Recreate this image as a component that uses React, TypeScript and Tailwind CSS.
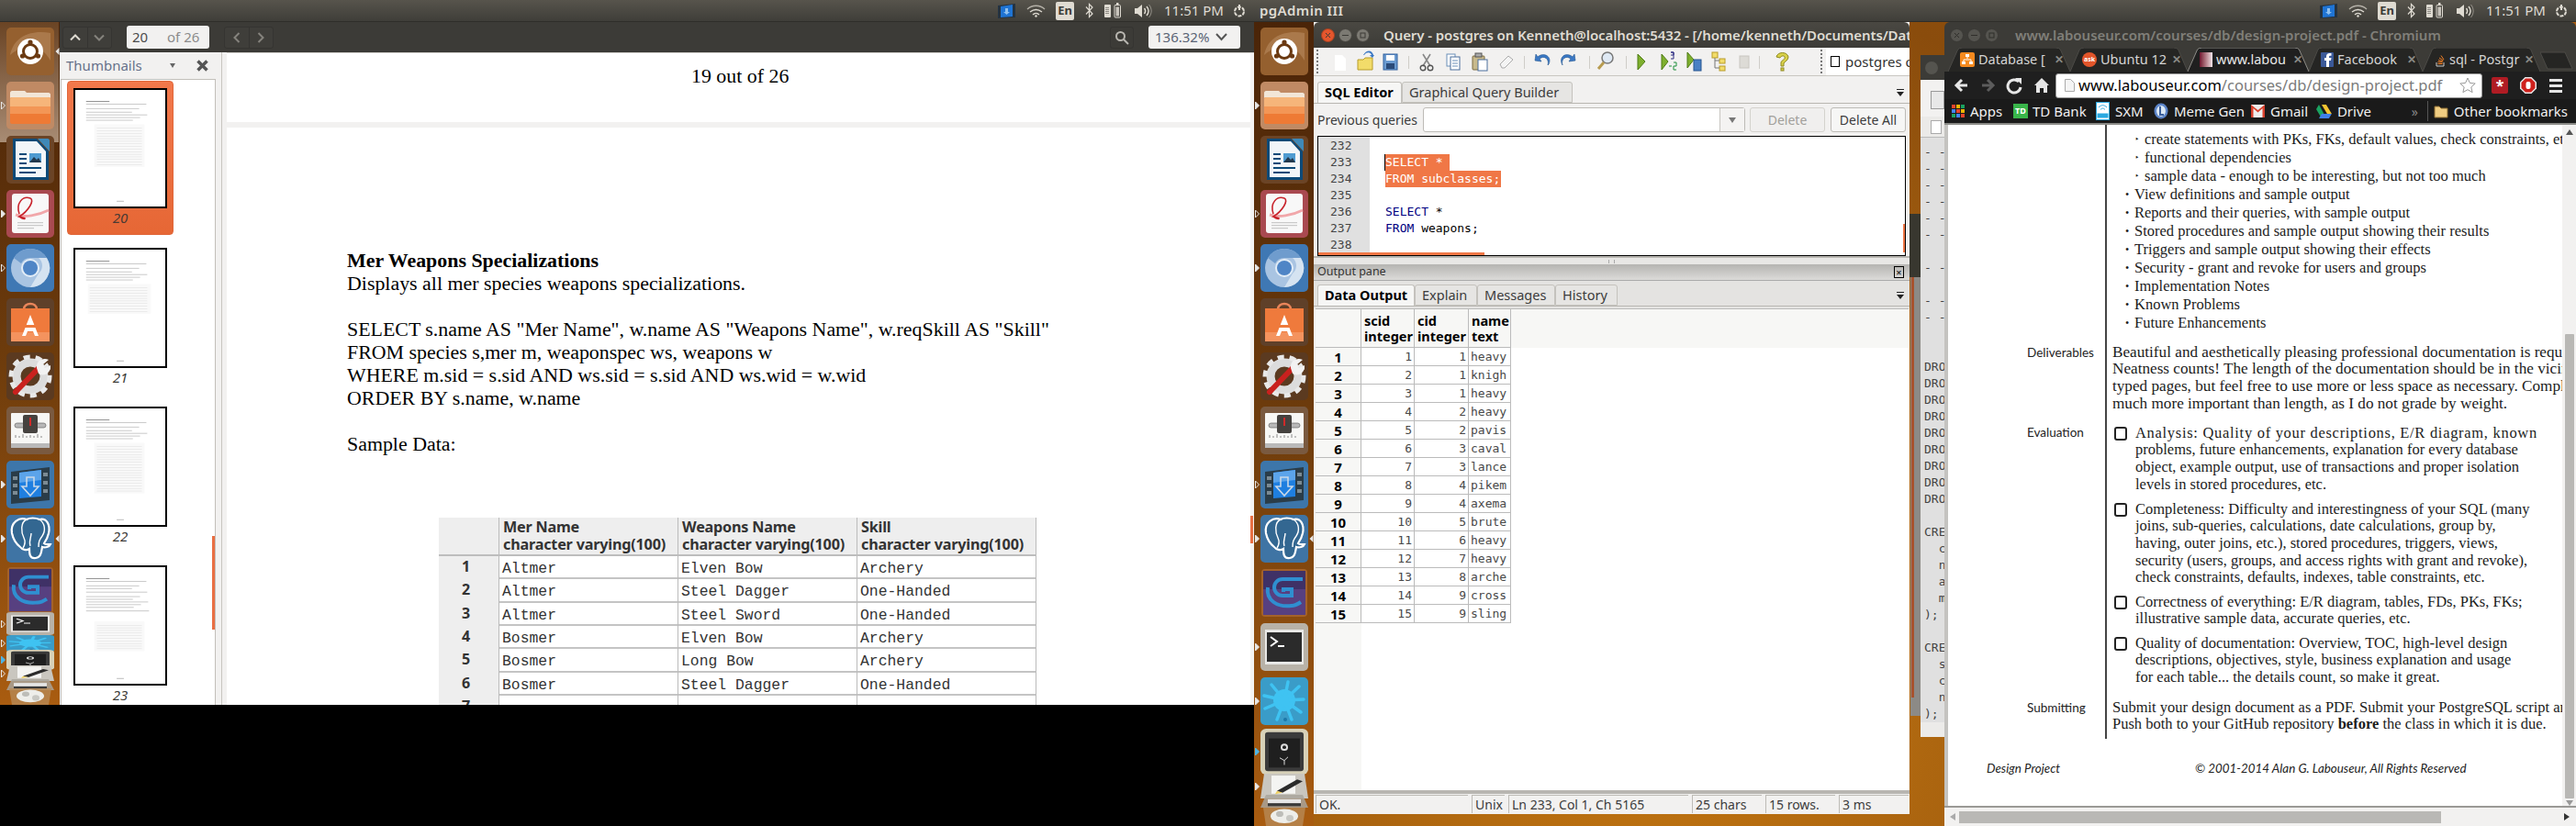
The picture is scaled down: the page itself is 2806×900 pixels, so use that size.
import { ReactNode } from "react"

type IconName =
  | "dash" | "files" | "writer" | "evince" | "chromium" | "bag" | "settings" | "mixer"
  | "movie" | "pg" | "gd" | "terminal" | "splash" | "safe" | "editor" | "drive" | "trash"

function LauncherArt({ name }: { name: IconName }) {
  switch (name) {
    case "dash":
      return (
        <>
          <rect width="52" height="52" rx="5" fill="#95602f" />
          <path d="M4 30C8 10 26 2 48 6v30C38 18 20 16 4 30z" fill="#b98a5f" opacity=".6" />
          <circle cx="26" cy="26" r="14" fill="#fff" />
          <circle cx="26" cy="26" r="7.5" fill="none" stroke="#6b3a12" strokeWidth="3" />
          <circle cx="26" cy="16" r="2.6" fill="#6b3a12" />
          <circle cx="17.5" cy="31" r="2.6" fill="#6b3a12" />
          <circle cx="34.5" cy="31" r="2.6" fill="#6b3a12" />
        </>
      )
    case "files":
      return (
        <>
          <rect width="52" height="52" rx="5" fill="#c08a64" />
          <path d="M4 12c0-1 1-2 2-2h14l2 2h24c1 0 2 1 2 2v4H4z" fill="#f2e6d8" />
          <rect x="4" y="17" width="44" height="29" rx="2" fill="#ee7a35" />
          <rect x="4" y="17" width="44" height="13" rx="2" fill="#f6b57a" />
          <rect x="4" y="27" width="44" height="8" fill="#f39656" />
        </>
      )
    case "writer":
      return (
        <>
          <rect width="52" height="52" rx="5" fill="#6b4426" />
          <path d="M7 3h26l13 14v31H7z" fill="#0d4a78" />
          <path d="M34 3h11c1 0 2 1 2 2v12z" fill="#3f89b8" />
          <path d="M10 6h23l10 11v28H10z" fill="#f2f5f8" />
          <g fill="#0d4a78">
            <rect x="14" y="19" width="8" height="2" />
            <rect x="14" y="24" width="8" height="2" />
            <rect x="14" y="29" width="8" height="2" />
            <rect x="14" y="34" width="24" height="2" />
            <rect x="14" y="39" width="18" height="2" />
          </g>
          <rect x="25" y="19" width="13" height="10" fill="#4f9bd1" />
          <path d="M25 29l5-6 3 3 2-2 3 5z" fill="#23394d" />
        </>
      )
    case "evince":
      return (
        <>
          <rect width="52" height="52" rx="5" fill="#a94950" />
          <rect x="6" y="4" width="40" height="43" rx="3" fill="#f8f8f8" />
          <path d="M46 22C34 28 20 30 10 27" fill="none" stroke="#f1a7aa" strokeWidth="3" />
          <path d="M14 26C10 14 18 6 26 9c5 2-2 14-12 20 10 2 6 4 0 0" fill="none" stroke="#c8232c" strokeWidth="1.6" />
          <g fill="#c9c9c9">
            <rect x="12" y="35" width="28" height="1.2" />
            <rect x="12" y="38" width="28" height="1.2" />
            <rect x="12" y="41" width="18" height="1.2" />
          </g>
        </>
      )
    case "chromium":
      return (
        <>
          <rect width="52" height="52" rx="5" fill="#3f78b4" />
          <circle cx="26" cy="26" r="21" fill="#a9c4e2" />
          <path d="M26 5a21 21 0 0 1 18 10H26a11 11 0 0 0-10 6L8 15A21 21 0 0 1 26 5z" fill="#6f9ccd" />
          <path d="M44 15a21 21 0 0 1-18 32l9-15a11 11 0 0 0 0-17z" fill="#d5e3f1" />
          <circle cx="26" cy="26" r="10" fill="#e3edf7" />
          <circle cx="26" cy="26" r="8" fill="#4f85c6" />
        </>
      )
    case "bag":
      return (
        <>
          <rect width="52" height="52" rx="5" fill="#5f4029" />
          <path d="M19 12c0-8 14-8 14 0" fill="none" stroke="#e9855a" strokeWidth="2.6" />
          <rect x="5" y="11" width="42" height="36" fill="#ef7a3c" />
          <rect x="5" y="37" width="42" height="10" fill="#f4935e" />
          <path d="M26 18l9 23h-4l-2-5h-6l-2 5h-4z" fill="#fff" />
          <rect x="17" y="29" width="18" height="3" fill="#ef7a3c" />
        </>
      )
    case "settings":
      return (
        <>
          <rect width="52" height="52" rx="5" fill="#5b3a20" />
          <circle cx="26" cy="26" r="15" fill="none" stroke="#dcdcdc" strokeWidth="9" />
          <circle cx="26" cy="26" r="21" fill="none" stroke="#e8e8e8" strokeWidth="5" strokeDasharray="7 6" />
          <path d="M10 43L36 16" stroke="#c9211e" strokeWidth="6" strokeLinecap="round" />
          <path d="M33 17c-1-7 6-12 13-9l-6 5 2 4 6-3c1 8-7 13-13 9z" fill="#f2f2f2" />
        </>
      )
    case "mixer":
      return (
        <>
          <rect width="52" height="52" rx="5" fill="#7a5a40" />
          <rect x="5" y="7" width="42" height="38" rx="1" fill="#f7f7f5" />
          <rect x="5" y="40" width="42" height="5" fill="#b9b9b9" />
          <rect x="9" y="18" width="34" height="5" rx="2.5" fill="#b8b8b8" stroke="#555" strokeWidth=".6" />
          <rect x="18" y="9" width="16" height="20" rx="2" fill="#45423f" />
          <rect x="25" y="12" width="2" height="9" fill="#d02a2a" />
          <path d="M10 34v-3m4 3v-2m4 2v-4m4 4v-2m4 2v-3m4 3v-2m4 2v-4m4 4v-2" stroke="#8a8a8a" />
        </>
      )
    case "movie":
      return (
        <>
          <rect width="52" height="52" rx="5" fill="#3d76aa" />
          <path d="M5 12l42-5v36l-42 4z" fill="#2a3c48" />
          <path d="M14 13l24-3v29l-24 2z" fill="#1f7fe0" />
          <path d="M14 13l24-3v11l-24 3z" fill="#5ca4ea" />
          <path d="M22 18h8v10h5l-9 10-9-10h5z" fill="none" stroke="#c8d8e8" strokeWidth="1.6" />
          <g fill="#7b8a93">
            <rect x="7" y="17" width="5" height="4" />
            <rect x="7" y="25" width="5" height="4" />
            <rect x="7" y="33" width="5" height="4" />
            <rect x="40" y="13" width="5" height="4" />
            <rect x="40" y="22" width="5" height="4" />
            <rect x="40" y="31" width="5" height="4" />
          </g>
        </>
      )
    case "pg":
      return (
        <>
          <rect width="52" height="52" rx="5" fill="#3f74a4" />
          <path d="M6 20C4 8 14 2 22 5c3-2 10-2 14 0 8-2 12 6 10 15-1 5-3 8-5 11 2 2 5 1 7 1-1 3-6 4-9 3-1 5-1 11-7 12-7 1-7-5-7-10-3 2-8 1-10-2-5-4-8-10-9-15z" fill="#336791" stroke="#fff" strokeWidth="2.2" />
          <path d="M22 5c-7 3-6 14-3 20 2 4 1 8-1 11M36 5c6 4 7 12 3 18-3 4-4 6-4 12M26 34c-2-5 1-9 1-14" fill="none" stroke="#fff" strokeWidth="1.4" />
        </>
      )
    case "gd":
      return (
        <>
          <rect x="1" y="0" width="50" height="52" rx="4" fill="#a4622a" />
          <rect x="3" y="2" width="46" height="48" fill="#574080" />
          <rect x="3" y="2" width="46" height="20" fill="#3f3166" />
          <path d="M46 11H24c-5 0-9 4-9 9s4 9 9 9h10v-7h-9v3" fill="none" stroke="#2f8fd0" strokeWidth="4" />
          <path d="M8 20c-2 14 10 22 26 20 4 0 7-2 10-4" fill="none" stroke="#2f8fd0" strokeWidth="4" />
        </>
      )
    case "terminal":
      return (
        <>
          <rect width="52" height="52" rx="5" fill="#b8b2a8" />
          <rect x="5" y="7" width="42" height="38" fill="#e8e8e6" />
          <rect x="7" y="10" width="38" height="32" fill="#2b2b2b" />
          <path d="M11 15l7 5-7 5" fill="none" stroke="#fff" strokeWidth="2" />
          <rect x="19" y="24" width="7" height="2" fill="#fff" />
        </>
      )
    case "splash":
      return (
        <>
          <rect width="52" height="52" rx="5" fill="#3a9cc8" />
          <circle cx="26" cy="25" r="12" fill="#3fc3f2" />
          <path d="M26 25L12 8M26 25L30 5M26 25L42 10M26 25L47 24M26 25L44 38M26 25L34 46M26 25L18 46M26 25L5 34M26 25L4 20" stroke="#3fc3f2" strokeWidth="3.5" strokeLinecap="round" />
          <circle cx="27" cy="46" r="2" fill="#1c77a8" />
        </>
      )
    case "safe":
      return (
        <>
          <rect width="52" height="52" rx="6" fill="#d7d1b8" />
          <rect x="5" y="4" width="42" height="44" rx="3" fill="#3b3b3b" />
          <rect x="9" y="11" width="34" height="33" fill="#1f1f1f" />
          <circle cx="26" cy="21" r="4" fill="#ddd" />
          <circle cx="26" cy="21" r="2" fill="#222" />
          <path d="M26 36l-5-3M26 36l4-4M26 36v5" stroke="#ddd" />
        </>
      )
    case "editor":
      return (
        <>
          <path d="M4 0h44l4 52H0z" fill="#c9c6bf" />
          <rect x="12" y="4" width="26" height="38" fill="#f4f4f2" />
          <path d="M18 36l22-24 6 4-22 24z" fill="#2b2b2b" />
          <path d="M18 36l6 4-8 3z" fill="#f0d060" />
        </>
      )
    case "drive":
      return (
        <>
          <path d="M6 0h40l6 52H0z" fill="#a9a49b" opacity=".85" />
          <rect x="8" y="18" width="36" height="18" fill="#e6e6e6" />
          <rect x="8" y="34" width="36" height="12" fill="#3a3a3a" />
        </>
      )
    case "trash":
      return (
        <>
          <path d="M3 0h46l-3 52H6z" fill="#b88a55" opacity=".8" />
          <ellipse cx="26" cy="24" rx="15" ry="20" fill="#eeeeea" />
          <ellipse cx="21" cy="18" rx="4" ry="8" fill="#bdbdb8" />
          <ellipse cx="32" cy="30" rx="4" ry="9" fill="#c8c8c3" />
        </>
      )
  }
}

function Tile({ name, h = 52, pip, right, className = "" }: { name: IconName; h?: number; pip?: "solid" | "hollow" | "blue"; right?: boolean; className?: string }) {
  return (
    <div className={`relative w-[52px] shrink-0 ${className}`}>
      <svg width="52" height={h} viewBox="0 0 52 52" preserveAspectRatio="none" className="block">
        <LauncherArt name={name} />
      </svg>
      {pip && (
        <svg width="5" height="9" viewBox="0 0 5 9" className="absolute top-1/2 left-[-6px] -translate-y-1/2">
          <path
            d="M.5.5L4.5 4.5.5 8.5z"
            fill={pip === "hollow" ? "none" : pip === "blue" ? "#4db6e8" : "#e8e8e8"}
            stroke={pip === "blue" ? "#4db6e8" : "#e8e8e8"}
          />
        </svg>
      )}
      {right && (
        <svg width="5" height="9" viewBox="0 0 5 9" className="absolute top-1/2 right-[-6px] -translate-y-1/2">
          <path d="M4.5.5L.5 4.5 4.5 8.5z" fill="#e8e8e8" />
        </svg>
      )}
    </div>
  )
}

function Launcher({ monitor }: { monitor: "left" | "right" }) {
  const left = monitor === "left"
  return (
    <div className="relative w-[65px] shrink-0 h-full overflow-hidden bg-gradient-to-b from-[#4a2408] via-[#6e3c0c] to-[#a95c10] flex flex-col items-center gap-[7px] pt-[6px]">
      {left && <div className="absolute top-0 left-0 w-[64px] h-[131px] bg-gradient-to-b from-[#6a4424] to-[#a88c74]" />}
      <Tile name="dash" right={left} />
      <Tile name="files" pip={left ? "hollow" : "solid"} />
      <Tile name="writer" />
      <Tile name="evince" pip={left ? "solid" : "hollow"} />
      <Tile name="chromium" pip={left ? "hollow" : "solid"} />
      <Tile name="bag" />
      <Tile name="settings" />
      <Tile name="mixer" />
      <Tile name="movie" pip={left ? "solid" : "hollow"} />
      <Tile name="pg" pip="solid" right />
      {left ? (
        <>
          <Tile name="gd" h={50} className="-mt-[2px]" />
          <div className="flex flex-col -mt-[8px]">
            <Tile name="terminal" h={25} pip="hollow" />
            <Tile name="splash" h={18} pip="hollow" />
            <Tile name="safe" h={22} pip="blue" className="-mt-[2px]" />
            <Tile name="editor" h={17} pip="hollow" className="-mt-[5px]" />
            <Tile name="drive" h={12} className="-mt-[2px]" />
            <Tile name="trash" h={18} className="-mt-[2px]" />
          </div>
        </>
      ) : (
        <>
          <Tile name="gd" />
          <Tile name="terminal" pip="solid" />
          <Tile name="splash" pip="solid" />
          <div className="flex flex-col -mt-[3px]">
            <Tile name="safe" h={50} pip="blue" />
            <Tile name="editor" h={27} pip="solid" className="-mt-[1px]" />
            <Tile name="drive" h={14} className="-mt-[4px]" />
            <Tile name="trash" h={20} />
          </div>
        </>
      )}
    </div>
  )
}

function Indicators() {
  return (
    <div className="flex items-center h-full">
      <svg width="21" height="18" viewBox="0 0 21 18" className="mr-[11px]">
        <path d="M1 3l19-2v15L1 17z" fill="#243342" />
        <path d="M4 4l13-2v13L4 16z" fill="#1f74d4" />
        <path d="M9 6h3v4h2l-3.5 3L7 10h2z" fill="#8fc0ef" />
      </svg>
      <svg width="21" height="14" viewBox="0 0 21 14" className="mr-[11px]" fill="none" stroke="#dfdbd2">
        <path d="M1 5c5-5 14-5 19 0" strokeWidth="1.3" opacity=".7" />
        <path d="M4 8c4-3 9-3 13 0" strokeWidth="1.4" />
        <path d="M7 11c2-2 5-2 7 0" strokeWidth="1.4" />
        <circle cx="10.5" cy="12.5" r="1.2" fill="#dfdbd2" stroke="none" />
      </svg>
      <div className="w-[20px] h-[20px] rounded-[2px] bg-[#dfdbd2] text-[#3c3b37] text-[13px] font-bold flex items-center justify-center mr-[12px] font-['Noto_Sans',sans-serif]">En</div>
      <svg width="9" height="17" viewBox="0 0 9 17" className="mr-[12px]" fill="none" stroke="#dfdbd2" strokeWidth="1.2">
        <path d="M1 4.5l7 7.5-3.500 3.500V1.500L8 5 1 12.500" />
      </svg>
      <svg width="18" height="17" viewBox="0 0 18 17" className="mr-[14px]">
        <rect x="0" y="2" width="7" height="14" rx="1" fill="#dfdbd2" />
        <path d="M2 5v8M4 5v8" stroke="#3c3b37" strokeDasharray="1 1" />
        <rect x="11" y="2.5" width="6.5" height="13.5" rx="1" fill="none" stroke="#dfdbd2" />
        <rect x="12.5" y="4.5" width="3.5" height="10" fill="#dfdbd2" opacity=".85" />
        <rect x="13" y="0" width="2.5" height="2" fill="#dfdbd2" />
      </svg>
      <svg width="20" height="16" viewBox="0 0 20 16" className="mr-[13px]" fill="none" stroke="#dfdbd2">
        <path d="M1 5h3l5-4v14l-5-4H1z" fill="#dfdbd2" stroke="none" />
        <path d="M11.5 5c1.5 2 1.5 4 0 6" strokeWidth="1.5" />
        <path d="M14 3c2.5 3 2.5 7 0 10" strokeWidth="1.4" />
        <path d="M16.5 1c3.5 4 3.500 10 0 14" opacity=".5" />
      </svg>
      <span className="text-[15px] text-[#dfdbd2] mr-[14px] whitespace-nowrap w-[60px] font-['Noto_Sans',sans-serif]">11:51 PM</span>
      <svg width="16" height="16" viewBox="0 0 16 16" fill="none" stroke="#dfdbd2" className="mr-[3px]">
        <circle cx="8" cy="8.5" r="5" strokeWidth="2" strokeDasharray="4 1.2" />
        <path d="M8 1v6" strokeWidth="2" />
      </svg>
    </div>
  )
}

function Panel({ title }: { title?: string }) {
  return (
    <div className="h-6 shrink-0 bg-gradient-to-b from-[#57544c] to-[#3f3e39] border-b border-[#2f2e2a] flex items-center justify-between pr-[5px]">
      <span className="pl-[6px] text-[15px] font-semibold text-[#dfdbd2] whitespace-nowrap tracking-[0.4px] font-['Noto_Sans',sans-serif]">{title}</span>
      <Indicators />
    </div>
  )
}

function ThumbArt({ variant }: { variant: number }) {
  const rows = variant === 0 ? 15 : variant === 1 ? 10 : variant === 2 ? 18 : 10
  const top = variant === 3 ? 60 : 38
  const lines = variant === 3 ? [12, 15, 20, 23, 27, 32, 35, 38, 41, 44, 48] : [12, 15, 20, 24, 27, 30, 33]
  return (
    <svg width="98" height="127" viewBox="0 0 100 129" className="block">
      {lines.map((y, i) => (
        <rect key={i} x="12" y={y} width={i === 0 ? 26 : 50 + ((i * 17) % 25)} height=".8" fill={i === 0 ? "#777" : "#bbb"} />
      ))}
      <rect x={variant === 1 ? 14 : 21} y={top} width={variant === 1 ? 70 : 56} height={rows * 2.9 + 4} fill="#f9f9f9" />
      {Array.from({ length: rows }).map((_, i) => (
        <rect key={i} x={variant === 1 ? 16 : 24} y={top + 4 + i * 2.9} width={variant === 1 ? 64 : 50} height=".5" fill="#dcdcdc" />
      ))}
      <rect x="46" y="123" width="8" height=".8" fill="#aaa" />
    </svg>
  )
}

function Thumb({ n, variant, selected }: { n: number; variant: number; selected?: boolean }) {
  if (selected) {
    return (
      <div className="ml-[6px] w-[116px] h-[168px] shrink-0 bg-gradient-to-b from-[#f2784b] to-[#e66735] border border-[#e0663a] rounded-[4px] flex flex-col items-center pt-[7px]">
        <div className="border-2 border-black bg-white">
          <ThumbArt variant={variant} />
        </div>
        <span className="h-[20px] leading-[20px] text-[15px] italic text-[#4a3a33] font-['Noto_Sans',sans-serif]">{n}</span>
      </div>
    )
  }
  return (
    <div className="ml-[13px] w-[102px] mb-[8px] shrink-0 flex flex-col items-center">
      <div className="border-2 border-black bg-white">
        <ThumbArt variant={variant} />
      </div>
      <span className="h-[20px] leading-[20px] text-[15px] italic text-[#3c3b37] font-['Noto_Sans',sans-serif]">{n}</span>
    </div>
  )
}

function NavGroup({ children }: { children: ReactNode }) {
  return <div className="h-[24px] w-[54px] flex rounded-[3px] border border-[#353431] bg-[#3f3e3a] divide-x divide-[#353431]">{children}</div>
}

function NavBtn({ d, dim }: { d: string; dim?: boolean }) {
  return (
    <div className="flex-1 flex items-center justify-center">
      <svg width="14" height="14" viewBox="0 0 14 14" fill="none" stroke={dim ? "#85837d" : "#dfdbd2"} strokeWidth="2">
        <path d={d} />
      </svg>
    </div>
  )
}

const pdfRows = [
  ["1", "Altmer", "Elven Bow", "Archery"],
  ["2", "Altmer", "Steel Dagger", "One-Handed"],
  ["3", "Altmer", "Steel Sword", "One-Handed"],
  ["4", "Bosmer", "Elven Bow", "Archery"],
  ["5", "Bosmer", "Long Bow", "Archery"],
  ["6", "Bosmer", "Steel Dagger", "One-Handed"],
  ["7", "", "", ""],
]

function EvinceWindow() {
  return (
    <div className="flex-1 min-w-0 h-full flex flex-col bg-[#f2f1f0]">
      <div className="h-[33px] shrink-0 bg-[#3c3b37] flex items-center pl-[3px] pr-[15px]">
        <NavGroup>
          <NavBtn d="M2 9.5l5-5 5 5" />
          <NavBtn d="M2 4.5l5 5 5-5" dim />
        </NavGroup>
        <div className="ml-[16px] w-[90px] h-[25px] rounded-[3px] bg-[#f2f1f0] flex items-center pl-[6px] text-[15px] font-['Noto_Sans',sans-serif]">
          <span className="w-[38px] text-[#4c4c4c]">20</span>
          <span className="text-[#8c8c8c]">of 26</span>
        </div>
        <div className="ml-[16px]">
          <NavGroup>
            <NavBtn d="M9.5 2l-5 5 5 5" dim />
            <NavBtn d="M4.5 2l5 5-5 5" dim />
          </NavGroup>
        </div>
        <div className="ml-auto w-[26px] h-[24px] rounded-[3px] border border-[#353431] flex items-center justify-center">
          <svg width="16" height="16" viewBox="0 0 16 16" fill="none" stroke="#b8b6b0" strokeWidth="2">
            <circle cx="6.5" cy="6.5" r="4.5" />
            <path d="M10 10l5 5" />
          </svg>
        </div>
        <div className="ml-[16px] w-[100px] h-[25px] rounded-[3px] bg-[#f2f1f0] flex items-center justify-between pl-[7px] pr-[14px] text-[15px] text-[#5a6475] font-['Noto_Sans',sans-serif]">
          136.32%
          <svg width="13" height="9" viewBox="0 0 13 9" fill="none" stroke="#555" strokeWidth="2">
            <path d="M1 1l5.5 6L12 1" />
          </svg>
        </div>
      </div>
      <div className="flex-1 min-h-0 flex">
        <div className="w-[170px] shrink-0 flex flex-col">
          <div className="h-[29px] shrink-0 flex items-center pl-[7px] pr-[8px] text-[15px] text-[#66718a] font-['Noto_Sans',sans-serif]">
            <span className="flex-1">Thumbnails</span>
            <svg width="6" height="5" viewBox="0 0 6 5" className="mr-[23px]">
              <path d="M0 0h6L3 5z" fill="#666" />
            </svg>
            <svg width="13" height="13" viewBox="0 0 13 13" stroke="#555" strokeWidth="3.5">
              <path d="M1.5 1.5l10 10M11.5 1.5l-10 10" />
            </svg>
          </div>
          <div className="relative flex-1 min-h-0 overflow-hidden bg-white border-x border-t border-[#c2bfba] ml-[1px] flex flex-col pt-[1px] gap-[14px]">
            <Thumb n={20} variant={0} selected />
            <Thumb n={21} variant={1} />
            <Thumb n={22} variant={2} />
            <Thumb n={23} variant={3} />
            <div className="absolute right-0 top-[497px] w-[3px] h-[102px] bg-[#e96f43]" />
          </div>
        </div>
        <div className="w-[12px] shrink-0 flex justify-center">
          <div className="w-px bg-[#c8c5c0] ml-[1px]" />
        </div>
        <div className="relative flex-1 min-w-0 flex flex-col gap-[6px] border-t border-[#d5d3ce] text-[21.9px] leading-[25px] text-black font-['Liberation_Serif',serif]">
          <div className="h-[75px] shrink-0 bg-white pt-[12px] pl-[506px]">19 out of 26</div>
          <div className="flex-1 bg-white pt-[132px] pl-[131px] overflow-hidden">
            <div className="font-bold">Mer Weapons Specializations</div>
            <div>Displays all mer species weapons specializations.</div>
            <div className="h-[25px]" />
            <div className="whitespace-nowrap">SELECT s.name AS "Mer Name", w.name AS "Weapons Name", w.reqSkill AS "Skill"</div>
            <div>FROM species s,mer m, weaponspec ws, weapons w</div>
            <div>WHERE m.sid = s.sid AND ws.sid = s.sid AND ws.wid = w.wid</div>
            <div>ORDER BY s.name, w.name</div>
            <div className="h-[25px]" />
            <div>Sample Data:</div>
            <div className="ml-[100px] mt-[68px] w-[651px]">
              <div className="grid grid-cols-[66px_195px_195px_195px] h-[42px] bg-[#eeeeee] border-b-2 border-[#bdbdbd] text-[16.2px] leading-[18.5px] font-bold text-[#333] tracking-[-0.2px] font-['Noto_Sans',sans-serif]">
                <div className="border-r border-[#bbb]" />
                {["Mer Name", "Weapons Name", "Skill"].map((h) => (
                  <div key={h} className="border-r border-[#bbb] pl-[4px] pt-[1px]">
                    {h}
                    <div className="whitespace-nowrap">character varying(100)</div>
                  </div>
                ))}
              </div>
              {pdfRows.map((r) => (
                <div key={r[0]} className="grid grid-cols-[66px_195px_195px_195px] h-[25.33px] border-b-2 border-[#c4c4c4] text-[16.4px] leading-[27px] text-[#333] font-['Liberation_Mono',monospace]">
                  <div className="bg-[#eeeeee] border-r border-[#bbb] text-center pr-[6px] font-bold font-['Noto_Sans',sans-serif] text-[16px] leading-[23px]">{r[0]}</div>
                  <div className="border-r border-[#bbb] pl-[3px]">{r[1]}</div>
                  <div className="border-r border-[#bbb] pl-[3px]">{r[2]}</div>
                  <div className="border-r border-[#bbb] pl-[3px]">{r[3]}</div>
                </div>
              ))}
            </div>
          </div>
          <div className="absolute right-0 top-0 bottom-0 w-[4px] bg-[#f5f4f3]" />
          <div className="absolute right-[1px] top-[504px] w-[3px] h-[30px] bg-[#e96f43]" />
        </div>
      </div>
    </div>
  )
}

function WindowButtons({ dim }: { dim?: boolean }) {
  return (
    <div className="flex gap-[4px]">
      {[0, 1, 2].map((i) => (
        <div
          key={i}
          className={`w-[15px] h-[15px] rounded-full flex items-center justify-center ${dim ? "bg-[#55544f] border border-[#3a3935]" : i === 0 ? "bg-[#e5562d] border border-[#a8401f]" : "bg-[#7c7a73] border border-[#45433e]"}`}
        >
          <svg width="7" height="7" viewBox="0 0 7 7" fill="none" stroke={dim ? "#2f2e2a" : "#3c3b37"} strokeWidth="1">
            {i === 0 && <path d="M1 1l5 5M6 1L1 6" />}
            {i === 1 && <path d="M0 3.5h7" />}
            {i === 2 && <rect x="1" y="1" width="5" height="5" />}
          </svg>
        </div>
      ))}
    </div>
  )
}

function ToolGlyph({ x, children }: { x: number; children: ReactNode }) {
  return <g transform={`translate(${x} 0)`}>{children}</g>
}

function PgToolbarArt() {
  return (
    <svg width="540" height="31" viewBox="0 0 540 31" className="block">
      <ToolGlyph x={13}>
        <path d="M1 8h8l4 4v13H1z" fill="#fff" />
      </ToolGlyph>
      <ToolGlyph x={38}>
        <path d="M1 13h6l2-2h8v13H1z" fill="#f2dc6a" stroke="#b89c28" />
        <path d="M8 8c3-4 7-3 8 0l-2 0 3 3 2-3h-1c-1-5-7-7-11 0z" fill="#3b78c4" />
      </ToolGlyph>
      <ToolGlyph x={66}>
        <rect x="1" y="7" width="15" height="17" fill="#6a9ad0" stroke="#2f5f9c" />
        <rect x="4" y="8" width="9" height="6" fill="#fff" />
        <rect x="4" y="17" width="9" height="6" fill="#2a4a78" />
      </ToolGlyph>
      <rect x="94" y="9" width="1" height="14" fill="#cfcdc8" />
      <ToolGlyph x={106}>
        <path d="M4 7l8 13M12 7L4 20" stroke="#888" strokeWidth="1.6" />
        <circle cx="4" cy="22" r="2.8" fill="none" stroke="#555" strokeWidth="1.4" />
        <circle cx="12" cy="22" r="2.8" fill="none" stroke="#555" strokeWidth="1.4" />
      </ToolGlyph>
      <ToolGlyph x={135}>
        <rect x="1" y="7" width="9" height="13" fill="#fff" stroke="#6b8fb8" />
        <rect x="5" y="10" width="10" height="14" fill="#fff" stroke="#4a6f9c" />
        <path d="M7 14h6M7 17h6M7 20h6" stroke="#6b8fb8" />
      </ToolGlyph>
      <ToolGlyph x={163}>
        <rect x="1" y="9" width="13" height="15" rx="1" fill="#c8b98c" stroke="#7a6a40" />
        <rect x="4" y="6" width="7" height="4" fill="#aaa" stroke="#555" />
        <rect x="7" y="13" width="10" height="12" fill="#fff" stroke="#4a6f9c" />
      </ToolGlyph>
      <ToolGlyph x={192}>
        <path d="M2 18l9-9 5 4-9 9H4z" fill="#f4f4f4" stroke="#aaa" />
      </ToolGlyph>
      <rect x="220" y="9" width="1" height="14" fill="#cfcdc8" />
      <ToolGlyph x={231}>
        <path d="M15 19c2-7-4-11-9-7l2 3-7-1 1-7 2 3c7-6 16 0 12 8z" fill="#3b78c4" stroke="#24558f" strokeWidth=".6" />
      </ToolGlyph>
      <ToolGlyph x={260}>
        <path d="M2 19c-2-7 4-11 9-7l-2 3 7-1-1-7-2 3C6 4-3 10 2 19z" fill="#3b78c4" stroke="#24558f" strokeWidth=".6" />
      </ToolGlyph>
      <rect x="291" y="9" width="1" height="14" fill="#cfcdc8" />
      <ToolGlyph x={300}>
        <circle cx="11" cy="11" r="6" fill="#dfe9f4" stroke="#777" strokeWidth="1.5" />
        <path d="M7 16l-6 7" stroke="#b89c50" strokeWidth="3" />
      </ToolGlyph>
      <rect x="331" y="9" width="1" height="14" fill="#cfcdc8" />
      <ToolGlyph x={342}>
        <path d="M2 7l8 8-8 9z" fill="#7fb02e" stroke="#4e7a14" />
      </ToolGlyph>
      <ToolGlyph x={369}>
        <path d="M1 7l7 8-7 9z" fill="#7fb02e" stroke="#4e7a14" />
        <path d="M11 5h3v7h-3M11 5h3v3h-3" fill="none" stroke="#2a2a80" />
        <path d="M9 20h3M14 16h3v4h-3v4h3" fill="none" stroke="#1f8f3a" />
      </ToolGlyph>
      <ToolGlyph x={397}>
        <path d="M1 5l7 8-7 9z" fill="#7fb02e" stroke="#4e7a14" />
        <rect x="8" y="13" width="8" height="12" fill="#4a80c4" stroke="#24558f" />
      </ToolGlyph>
      <ToolGlyph x={424}>
        <rect x="1" y="5" width="6" height="6" fill="#f2dc6a" stroke="#b89c28" />
        <rect x="9" y="12" width="6" height="5" fill="#f2dc6a" stroke="#b89c28" />
        <rect x="9" y="20" width="6" height="5" fill="#f2dc6a" stroke="#b89c28" />
        <path d="M4 11v11h5M4 14h5" fill="none" stroke="#777" />
      </ToolGlyph>
      <rect x="455" y="9" width="10" height="13" fill="#dddbd6" stroke="#c8c6c0" />
      <rect x="476" y="9" width="1" height="14" fill="#cfcdc8" />
      <ToolGlyph x={494}>
        <path d="M1 10c1-6 12-6 13 0 0 4-4 5-5 7v3H6v-4c1-3 5-3 4-6-1-2-4-1-5 1z" fill="#d8d04a" stroke="#8f8a20" />
        <rect x="6" y="22" width="3" height="3" fill="#d8d04a" stroke="#8f8a20" />
      </ToolGlyph>
    </svg>
  )
}

function Grip() {
  return <div className="w-[3px] h-[26px] mx-[3px] border-l-2 border-dotted border-[#777]" />
}

function NbTabs({ tabs }: { tabs: { label: string; w: number }[] }) {
  return (
    <div className="flex items-end pl-[4px] pr-[6px] border-b border-[#b8b6b1]">
      {tabs.map((t, i) => (
        <div
          key={t.label}
          style={{ width: t.w }}
          className={`h-[23px] border border-[#c4c2bd] rounded-t-[3px] flex items-center text-[14.5px] whitespace-nowrap pl-[7px] ${i === 0 ? "font-bold bg-[#f6f6f5] text-black border-b-0" : "bg-[#e6e5e3] text-[#3c3c3c]"}`}
        >
          {t.label}
        </div>
      ))}
      <svg width="8" height="8" viewBox="0 0 8 8" className="ml-auto mb-[7px]">
        <path d="M0 0h8v1H0zM0 3h8L4 8z" fill="#222" />
      </svg>
    </div>
  )
}

const editorLines = [
  { n: 232, text: null },
  { n: 233, text: "sel1" },
  { n: 234, text: "sel2" },
  { n: 235, text: null },
  { n: 236, text: "plain1" },
  { n: 237, text: "plain2" },
  { n: 238, text: null },
]

function EditorLine({ kind }: { kind: string | null }) {
  if (kind === "sel1") return <span className="inline-block w-[71px] h-[18px] bg-[#f07746] text-white border-l border-black -ml-px">SELECT *</span>
  if (kind === "sel2") return <span className="inline-block h-[18px] bg-[#f07746] text-white pr-[1px]">FROM subclasses;</span>
  if (kind === "plain1") return <span className="text-[#00007f]">SELECT <span className="text-black">*</span></span>
  if (kind === "plain2") return <span><span className="text-[#00007f]">FROM</span> <span className="text-black">weapons;</span></span>
  return null
}

const gridNames = ["heavy", "knigh", "heavy", "heavy", "pavis", "caval", "lance", "pikem", "axema", "brute", "heavy", "heavy", "arche", "cross", "sling"]
const gridCids = [1, 1, 1, 2, 2, 3, 3, 4, 4, 5, 6, 7, 8, 9, 9]

function PgAdminWindow() {
  return (
    <div className="absolute left-0 top-0 w-[649px] h-[863px] flex flex-col bg-[#f2f1f0] font-['Noto_Sans',sans-serif] overflow-hidden">
      <div className="h-[28px] shrink-0 bg-gradient-to-b from-[#4a4842] to-[#3c3b37] rounded-t-[6px] flex items-center pl-[8px] text-[#dfdbd2]">
        <WindowButtons />
        <span className="ml-[15px] text-[15px] font-semibold whitespace-nowrap tracking-[-0.1px]">Query - postgres on Kenneth@localhost:5432 - [/home/kenneth/Documents/Dat</span>
      </div>
      <div className="h-[31px] shrink-0 flex items-center justify-between border-b border-[#c8c6c1] overflow-hidden">
        <div className="flex items-center">
          <Grip />
          <PgToolbarArt />
        </div>
        <div className="flex items-center h-full">
          <Grip />
          <div className="w-[103px] h-full bg-white flex items-center pl-[5px] text-[15px] text-[#333] whitespace-nowrap overflow-hidden">
            <span className="w-[10px] h-[12px] border border-black mr-[6px] shrink-0" />
            postgres on
          </div>
        </div>
      </div>
      <div className="pt-[6px] shrink-0">
        <NbTabs tabs={[{ label: "SQL Editor", w: 92 }, { label: "Graphical Query Builder", w: 186 }]} />
      </div>
      <div className="h-[35px] shrink-0 flex items-center pl-[4px] pr-[4px] text-[14px] text-[#3c3c3c]">
        <span className="w-[115px] shrink-0 whitespace-nowrap">Previous queries</span>
        <div className="flex w-[351px] h-[27px] rounded-[3px] border border-[#bdbbb6] bg-white">
          <div className="flex-1" />
          <div className="w-[27px] bg-[#f4f3f2] border-l border-[#c8c6c1] flex items-center justify-center">
            <svg width="8" height="6" viewBox="0 0 8 6"><path d="M0 0h8L4 6z" fill="#777" /></svg>
          </div>
        </div>
        <div className="ml-[5px] w-[82px] h-[27px] rounded-[3px] border border-[#d4d2cd] bg-[#f0efee] flex items-center justify-center text-[#a2a09b]">Delete</div>
        <div className="ml-[6px] w-[82px] h-[27px] rounded-[3px] border border-[#bdbbb6] bg-[#f6f6f5] flex items-center justify-center whitespace-nowrap">Delete All</div>
      </div>
      <div className="relative mx-[4px] h-[131px] shrink-0 bg-white border border-black flex text-[13px] leading-[18px] font-['DejaVu_Sans_Mono',monospace] overflow-hidden">
        <div className="w-[56px] shrink-0 bg-[#e0e0e0] text-[#444] pl-[13px] pt-[1px]">
          {editorLines.map((l) => (
            <div key={l.n}>{l.n}</div>
          ))}
        </div>
        <div className="flex-1 pl-[17px] pt-[1px] whitespace-pre">
          {editorLines.map((l) => (
            <div key={l.n} className="h-[18px]">
              <EditorLine kind={l.text} />
            </div>
          ))}
        </div>
        <div className="absolute left-0 bottom-0 w-[181px] h-[3px] bg-[#f07746]" />
        <div className="absolute right-0 bottom-[3px] w-[2px] h-[31px] bg-[#f07746]" />
      </div>
      <div className="h-[9px] shrink-0 border-t-2 border-[#b8b6b1] bg-[#e8e7e5] flex items-center justify-center">
        <div className="w-[7px] h-[4px] border-x border-[#aaa]" />
      </div>
      <div className="h-[18px] shrink-0 bg-gradient-to-b from-[#b5b4b1] to-[#dcdbd9] border-b border-[#aaa] flex items-center justify-between pl-[4px] pr-[6px] text-[12.5px] text-[#333]">
        Output pane
        <span className="w-[11px] h-[13px] border border-black text-[11px] leading-[11px] font-bold text-center">×</span>
      </div>
      <div className="shrink-0 bg-[#e4e3e1] pt-[4px] pb-[2px]">
        <NbTabs tabs={[{ label: "Data Output", w: 106 }, { label: "Explain", w: 68 }, { label: "Messages", w: 85 }, { label: "History", w: 68 }]} />
      </div>
      <div className="flex-1 min-h-0 ml-[2px] mr-[1px] bg-white border-t border-[#bbb] flex overflow-hidden font-['DejaVu_Sans_Mono',monospace] text-[13px]">
        <div className="w-[50px] shrink-0 bg-[#f7f7f5]" />
        <div className="flex-1 min-w-0">
          <div className="-ml-[50px] bg-[#f7f7f5] h-[42px] flex font-bold text-[14.5px] leading-[17px] text-black font-['Noto_Sans',sans-serif]">
            <div className="w-[50px] border-r border-b border-[#bbb]" />
            <div className="w-[58px] border-r border-b border-[#bbb] pl-[3px] pt-[4px]">scid<div>integer</div></div>
            <div className="w-[59px] border-r border-b border-[#bbb] pl-[3px] pt-[4px]">cid<div>integer</div></div>
            <div className="w-[46px] border-r border-b border-[#bbb] pl-[3px] pt-[4px]">name<div>text</div></div>
          </div>
          {gridNames.map((name, i) => (
            <div key={i} className="-ml-[50px] h-[20px] flex leading-[19px] text-[#484848]">
              <div className="w-[50px] border-r border-b border-[#bbb] bg-[#f7f7f5] text-center font-bold text-[15px] leading-[21px] text-black font-['Noto_Sans',sans-serif]">{i + 1}</div>
              <div className="w-[58px] bg-white border-r border-b border-[#bbb] text-right pr-[2px]">{i + 1}</div>
              <div className="w-[59px] bg-white border-r border-b border-[#bbb] text-right pr-[2px]">{gridCids[i]}</div>
              <div className="w-[46px] bg-white border-r border-b border-[#bbb] pl-[2px] overflow-hidden whitespace-nowrap">{name}</div>
            </div>
          ))}
        </div>
      </div>
      <div className="h-[4px] shrink-0 bg-[#b8b6b1]" />
      <div className="h-[22px] shrink-0 flex items-center gap-[4px] pl-[2px] pr-[2px] text-[14px] text-[#3c3c3c]">
        {[
          { t: "OK.", w: 166 },
          { t: "Unix", w: 36 },
          { t: "Ln 233, Col 1, Ch 5165", w: 196 },
          { t: "25 chars", w: 76 },
          { t: "15 rows.", w: 76 },
          { t: "3 ms", w: 76 },
        ].map((s) => (
          <div key={s.t} style={{ width: s.w }} className="h-[20px] shrink-0 border-l border-t border-[#bdbbb6] pl-[3px] leading-[20px] whitespace-nowrap overflow-hidden">
            {s.t}
          </div>
        ))}
      </div>
    </div>
  )
}

const rearLines = [
  "- - K", "- - D", "- - S", "- - E", "- - F", "- - F", "", "- - M", "", "- - D", "- - C", "", "",
  "DROP", "DROP", "DROP", "DROP", "DROP", "DROP", "DROP", "DROP", "DROP", "",
  "CREATE", "  c", "  n", "  a", "  m", ");", "",
  "CREATE", "  s", "  c", "  n", ");",
]

function RearWindows() {
  return (
    <>
      <div className="absolute left-[649px] top-[209px] w-[12px] h-[69px] bg-[#38372f]" />
      <div className="absolute left-[650px] top-[278px] w-[11px] h-[478px] bg-[#8c8a86]">
        <div className="ml-[1px] w-[3px] h-[458px] bg-[#a7522e]" />
      </div>
      <div className="absolute left-[661px] top-[36px] w-[27px] h-[743px] flex flex-col bg-[#e0e0e0] overflow-hidden">
        <div className="h-[27px] shrink-0 bg-[#3c3b37] flex items-center pl-[5px]">
          <div className="w-[14px] h-[14px] rounded-full bg-[#55544f]" />
        </div>
        <div className="h-[40px] shrink-0 bg-[#f2f1f0] pl-[11px] pt-[12px]">
          <div className="w-[15px] h-[20px] bg-[#e8e8e8] border border-[#999]" />
        </div>
        <div className="h-[23px] shrink-0 bg-[#ebeae8] pl-[11px] pt-[4px] border-b border-[#bbb]">
          <div className="w-[12px] h-[15px] bg-white border border-[#aaa]" />
        </div>
        <div className="flex-1 pl-[4px] pt-[7px] text-[13px] leading-[18px] whitespace-pre text-[#444] font-['DejaVu_Sans_Mono',monospace]">
          {rearLines.map((l, i) => (
            <div key={i} className="h-[18px]">{l}</div>
          ))}
        </div>
        <div className="h-[24px] shrink-0 bg-[#ecebe9]" />
      </div>
    </>
  )
}

function Favicon({ kind }: { kind: string }) {
  if (kind === "db") {
    return (
      <svg width="16" height="16" viewBox="0 0 16 16">
        <rect width="16" height="16" rx="2" fill="#f58a1f" />
        <path d="M8 3v4M4 12V8h8v4" stroke="#fff" fill="none" />
        <rect x="6" y="2" width="4" height="3" fill="#fff" />
        <rect x="2" y="10" width="4" height="3" fill="#fff" />
        <rect x="10" y="10" width="4" height="3" fill="#fff" />
      </svg>
    )
  }
  if (kind === "ask") {
    return <div className="w-[16px] h-[16px] rounded-full bg-[#e2552a] text-white text-[7px] font-bold leading-[16px] text-center">ask</div>
  }
  if (kind === "pdf") return <div className="w-[14px] h-[16px] bg-gradient-to-r from-[#6e1230] to-[#f0e6ea]" />
  if (kind === "fb") {
    return (
      <svg width="14" height="16" viewBox="0 0 14 16">
        <rect width="14" height="16" rx="1" fill="#3b5998" />
        <path d="M9 16V9h2l.5-3H9V5c0-1 .4-1.3 1.5-1.3h1V1H9.5C7.3 1 6 2.3 6 4.5V6H4v3h2v7z" fill="#fff" />
      </svg>
    )
  }
  return (
    <svg width="12" height="17" viewBox="0 0 12 17" fill="none">
      <path d="M2 11v4h8v-4" stroke="#cccccc" />
      <path d="M3.5 12.5h5M3.5 10.5l5 .5M4 8.5l5 1.5M5 6l4.5 3M7 3.5l3 4.500" stroke="#f48024" />
    </svg>
  )
}

const chromeTabs = [
  { w: 133, icon: "db", label: "Database [" },
  { w: 128, icon: "ask", label: "Ubuntu 12" },
  { w: 132, icon: "pdf", label: "www.labou", active: true },
  { w: 124, icon: "fb", label: "Facebook" },
  { w: 128, icon: "so", label: "sql - Postgr" },
]

function ChromeTab({ w, icon, label, active }: { w: number; icon: string; label: string; active?: boolean }) {
  return (
    <div style={{ width: w }} className={`relative h-full shrink-0 flex items-center pl-[13px] pr-[7px] ${active ? "z-10" : ""}`}>
      <svg className="absolute inset-0 w-full h-full" viewBox="0 0 100 26" preserveAspectRatio="none">
        <path
          d="M0 26L8 2Q9 0 12 0H88Q91 0 92 2L100 26"
          fill={active ? "#1f1f1f" : "#252523"}
          stroke={active ? "#8e8d88" : "#4c4b47"}
          vectorEffect="non-scaling-stroke"
        />
      </svg>
      <div className="relative flex items-center w-full gap-[4px]">
        <div className="shrink-0">
          <Favicon kind={icon} />
        </div>
        <span className={`flex-1 min-w-0 overflow-hidden whitespace-nowrap text-[14.5px] ${active ? "text-[#e8e8e8]" : "text-[#d5d5d5]"}`}>{label}</span>
        <span className="text-[12px] text-[#8a8a86] font-bold shrink-0">✕</span>
      </div>
    </div>
  )
}

const bookmarks = [
  { id: "apps", label: "Apps", w: 67, gap: 6 },
  { id: "td", label: "TD Bank", w: 90, gap: 5 },
  { id: "sxm", label: "SXM", w: 63, gap: 6 },
  { id: "meme", label: "Meme Gen", w: 106, gap: 6 },
  { id: "gmail", label: "Gmail", w: 71, gap: 6 },
  { id: "drive", label: "Drive", w: 60, gap: 6 },
]

function BookmarkIcon({ id }: { id: string }) {
  if (id === "apps") {
    const colors = ["#e8452c", "#f4b400", "#1aa260", "#4285f4", "#e8452c", "#f4b400", "#1aa260", "#4285f4", "#e8452c"]
    return (
      <div className="grid grid-cols-3 gap-[1px] w-[14px]">
        {colors.map((c, i) => (
          <span key={i} style={{ background: c }} className="w-[4px] h-[4px]" />
        ))}
      </div>
    )
  }
  if (id === "td") return <div className="w-[16px] h-[16px] bg-[#39b54a] text-white text-[9px] font-bold flex items-center justify-center">TD</div>
  if (id === "sxm") {
    return (
      <svg width="15" height="20" viewBox="0 0 15 20" fill="none" stroke="#29a8e0">
        <rect x=".5" y=".5" width="14" height="19" fill="#fff" />
        <path d="M3 6c3-3 6-3 9 0M5 8.5c2-2 3-2 5 0" />
        <rect x="2" y="13" width="11" height="4" fill="#29a8e0" />
      </svg>
    )
  }
  if (id === "meme") {
    return (
      <svg width="16" height="18" viewBox="0 0 16 18">
        <ellipse cx="8" cy="9" rx="7.5" ry="8.5" fill="#5c84c8" />
        <ellipse cx="8" cy="9" rx="5" ry="6" fill="#dce8f4" />
        <path d="M7 4v9h4" stroke="#3a5f9c" strokeWidth="2" fill="none" />
      </svg>
    )
  }
  if (id === "gmail") {
    return (
      <svg width="15" height="14" viewBox="0 0 15 14">
        <rect width="15" height="14" fill="#eee" />
        <path d="M0 0l7.5 6L15 0v14h-2.5V4L7.5 8.5 2.5 4v10H0z" fill="#d8402c" />
      </svg>
    )
  }
  return (
    <svg width="17" height="15" viewBox="0 0 17 15">
      <path d="M6 0h5l6 10h-5z" fill="#f4c430" />
      <path d="M6 0l5.5 10L9 15 3 5z" fill="#1aa260" transform="translate(-3 0)" />
      <path d="M3 15l3-5h11l-3 5z" fill="#3f7fe8" />
    </svg>
  )
}

function ChromiumWindow() {
  return (
    <div className="absolute left-[687px] top-0 w-[688px] h-[876px] flex flex-col overflow-hidden font-['Noto_Sans',sans-serif]">
      <div className="h-[28px] shrink-0 bg-[#3c3b37] rounded-t-[6px] flex items-center pl-[6px]">
        <WindowButtons dim />
        <span className="ml-[18px] text-[15px] font-semibold text-[#807f79] whitespace-nowrap">www.labouseur.com/courses/db/design-project.pdf - Chromium</span>
      </div>
      <div className="h-[26px] shrink-0 bg-[#3c3b37] flex pl-[4px]">
        {chromeTabs.map((t) => (
          <ChromeTab key={t.label} w={t.w} icon={t.icon} label={t.label} active={t.active} />
        ))}
        <svg width="36" height="20" viewBox="0 0 36 20" className="mt-[4px] shrink-0">
          <path d="M0 1h27l8 18H8z" fill="#252523" stroke="#4c4b47" />
        </svg>
      </div>
      <div className="h-[30px] shrink-0 bg-[#1f1f1f] flex items-center pl-[9px] pr-[10px]">
        <svg width="106" height="20" viewBox="0 0 106 20" className="shrink-0">
          <path d="M16 10H5m5-6l-6 6 6 6" fill="none" stroke="#e6e6e6" strokeWidth="3" />
          <path d="M32 10h11m-5-6l6 6-6 6" fill="none" stroke="#5c5c5c" strokeWidth="3" />
          <path d="M72 6a7 7 0 1 0 2 6" fill="none" stroke="#e6e6e6" strokeWidth="3" />
          <path d="M68 2h7v7z" fill="#e6e6e6" />
          <path d="M97 2l-8 8h2v8h4v-5h4v5h4v-8h2z" fill="#e6e6e6" />
        </svg>
        <div className="ml-[6px] w-[465px] h-[27px] shrink-0 rounded-[3px] bg-white border border-[#999] flex items-center pl-[9px] pr-[6px] text-[16.5px] whitespace-nowrap">
          <svg width="11" height="14" viewBox="0 0 11 14" className="mr-[4px] shrink-0" fill="#f4f4f4" stroke="#aaa">
            <path d="M.5.5h6l4 4v9H.5z" />
          </svg>
          <span className="text-black">www.labouseur.com</span>
          <span className="text-[#7b7b7b]">/courses/db/design-project.pdf</span>
          <svg width="18" height="18" viewBox="0 0 18 18" className="ml-auto shrink-0" fill="none" stroke="#999">
            <path d="M9 1l2.4 5.4 5.8.6-4.4 3.900 1.300 5.700L9 13.700l-5.100 2.900 1.300-5.700L.8 7l5.800-.6z" />
          </svg>
        </div>
        <div className="ml-[10px] w-[18px] h-[18px] shrink-0 rounded-[2px] bg-[#b01c24] flex items-center justify-center text-white font-bold text-[16px] leading-none">*</div>
        <svg width="18" height="18" viewBox="0 0 18 18" className="ml-[13px] shrink-0">
          <path d="M5.5 0h7L18 5.5v7L12.5 18h-7L0 12.5v-7z" fill="#e8e8e8" />
          <path d="M6 1.5h6L16.500 6v6L12 16.500H6L1.500 12V6z" fill="#d0201c" />
          <rect x="6.5" y="5" width="5" height="8" rx="2" fill="#fff" />
        </svg>
        <div className="ml-[14px] w-[14px] flex flex-col gap-[3px] shrink-0">
          <span className="h-[3px] bg-[#e6e6e6]" />
          <span className="h-[3px] bg-[#e6e6e6]" />
          <span className="h-[3px] bg-[#e6e6e6]" />
        </div>
      </div>
      <div className="h-[28px] shrink-0 bg-[#1a1a1a] border-b-2 border-[#8a8a86] flex items-center pl-[8px] pr-[9px] text-[15px] text-[#f0f0f0] whitespace-nowrap">
        {bookmarks.map((b) => (
          <div key={b.id} style={{ width: b.w, gap: b.gap }} className="flex items-center shrink-0">
            <BookmarkIcon id={b.id} />
            {b.label}
          </div>
        ))}
        <span className="ml-auto mr-[10px] text-[#888] text-[14px]">»</span>
        <div className="w-px h-[22px] bg-[#555] mr-[6px]" />
        <svg width="16" height="16" viewBox="0 0 16 16" className="mr-[6px]">
          <path d="M1 3h5l2 2h7v10H1z" fill="#f0cd82" stroke="#8a6a30" />
        </svg>
        Other bookmarks
      </div>
      <div className="flex-1 min-h-0 flex">
        <div className="w-[4px] shrink-0 bg-[#c4c3c0]" />
        <div className="flex-1 min-w-0 bg-white overflow-hidden text-[#1c1c1c] text-[16.5px] leading-[18.67px] font-['Liberation_Serif',serif]">
          <PdfBody />
        </div>
        <div className="w-[15px] shrink-0 bg-[#f2f1f0] flex flex-col items-center">
          <svg width="8" height="6" viewBox="0 0 8 6" className="mt-[5px]"><path d="M4 0l4 6H0z" fill="#555" /></svg>
          <div className="mt-[217px] w-[10px] h-[506px] bg-[#b9b8b5] rounded-[1px]" />
          <svg width="8" height="6" viewBox="0 0 8 6" className="mt-[2px]"><path d="M0 0h8L4 6z" fill="#999" /></svg>
        </div>
      </div>
      <div className="h-[22px] shrink-0 bg-[#f2f1f0] border-t-2 border-[#9a9996] flex items-center pl-[6px] pr-[4px]">
        <svg width="6" height="8" viewBox="0 0 6 8"><path d="M6 0v8L0 4z" fill="#aaa" /></svg>
        <div className="ml-[4px] w-[525px] h-[13px] bg-[#b9b8b5]" />
        <svg width="6" height="8" viewBox="0 0 6 8" className="ml-auto mr-[3px]"><path d="M0 0v8l6-4z" fill="#333" /></svg>
      </div>
    </div>
  )
}

function SubBullet({ children }: { children: ReactNode }) {
  return (
    <div className="h-[20px] leading-[20px] flex whitespace-nowrap pl-[31px]">
      <span className="w-[10px] shrink-0 text-[10px]">‣</span>
      {children}
    </div>
  )
}

function Bullet({ children }: { children: ReactNode }) {
  return (
    <div className="h-[20px] leading-[20px] flex whitespace-nowrap pl-[20px]">
      <span className="w-[10px] shrink-0 text-[12px]">•</span>
      {children}
    </div>
  )
}

function Check({ lines, gap }: { lines: ReactNode[]; gap: string }) {
  return (
    <div className={`flex pl-[8px] ${gap}`}>
      <div className="w-[14px] h-[15px] mt-[2px] shrink-0 rounded-[3px] border-2 border-[#222] mr-[9px]" />
      <div className="whitespace-nowrap">
        {lines.map((l, i) => (
          <div key={i}>{l}</div>
        ))}
      </div>
    </div>
  )
}

function SideLabel({ children, pt }: { children: ReactNode; pt: string }) {
  return <div className={`pl-[86px] text-[13.5px] text-[#222] font-['Lato',sans-serif] ${pt}`}>{children}</div>
}

function PdfBody() {
  return (
    <>
      <div className="grid grid-cols-[171px_1fr] w-[669px]">
        <div />
        <div className="border-l-2 border-[#444] pt-[6px]">
          <SubBullet>create statements with PKs, FKs, default values, check constraints, etc.</SubBullet>
          <SubBullet>functional dependencies</SubBullet>
          <SubBullet>sample data - enough to be interesting, but not too much</SubBullet>
          <Bullet>View definitions and sample output</Bullet>
          <Bullet>Reports and their queries, with sample output</Bullet>
          <Bullet>Stored procedures and sample output showing their results</Bullet>
          <Bullet>Triggers and sample output showing their effects</Bullet>
          <Bullet>Security - grant and revoke for users and groups</Bullet>
          <Bullet>Implementation Notes</Bullet>
          <Bullet>Known Problems</Bullet>
          <Bullet>Future Enhancements</Bullet>
        </div>

        <SideLabel pt="pt-[13px]">Deliverables</SideLabel>
        <div className="border-l-2 border-[#444] pl-[6px] pt-[12.67px] whitespace-nowrap overflow-hidden text-[17.2px]">
          <div>Beautiful and aesthetically pleasing professional documentation is required.</div>
          <div>Neatness counts! The length of the documentation should be in the vicinity of</div>
          <div>typed pages, but feel free to use more or less space as necessary. Completeness is</div>
          <div>much more important than length, as I do not grade by weight.</div>
        </div>

        <SideLabel pt="pt-[13px]">Evaluation</SideLabel>
        <div className="border-l-2 border-[#444] pt-[13.3px]">
          <Check
            gap=""
            lines={[
              <span className="tracking-[0.7px]">Analysis: Quality of your descriptions, E/R diagram, known</span>,
              "problems, future enhancements, explanation for every database",
              "object, example output, use of transactions and proper isolation",
              "levels in stored procedures, etc.",
            ]}
          />
          <Check
            gap="mt-[8.3px]"
            lines={[
              "Completeness: Difficulty and interestingness of your SQL (many",
              "joins, sub-queries, calculations, date calculations, group by,",
              "having, outer joins, etc.), stored procedures, triggers, views,",
              "security (users, groups, and access rights with grant and revoke),",
              "check constraints, defaults, indexes, table constraints, etc.",
            ]}
          />
          <Check
            gap="mt-[7.67px]"
            lines={["Correctness of everything: E/R diagram, tables, FDs, PKs, FKs;", "illustrative sample data, accurate queries, etc."]}
          />
          <Check
            gap="mt-[7.67px]"
            lines={[
              "Quality of documentation: Overview, TOC, high-level design",
              "descriptions, objectives, style, business explanation and usage",
              "for each table... the details count, so make it great.",
            ]}
          />
        </div>

        <SideLabel pt="pt-[14px]">Submitting</SideLabel>
        <div className="border-l-2 border-[#444] pl-[6px] pt-[14px] pb-[6px] whitespace-nowrap overflow-hidden">
          <div>Submit your design document as a PDF. Submit your PostgreSQL script and</div>
          <div>
            Push both to your GitHub repository <b>before</b> the class in which it is due.
          </div>
        </div>
      </div>
      <div className="mt-[23px] flex italic text-[13.4px] leading-[18px] text-[#222] font-['Lato',sans-serif]">
        <span className="ml-[42px] w-[227px] shrink-0">Design Project</span>
        <span className="whitespace-nowrap">© 2001-2014 Alan G. Labouseur, All Rights Reserved</span>
      </div>
    </>
  )
}

export default function App() {
  return (
    <div className="flex w-[2806px] h-[900px] overflow-hidden">
      <div className="w-[1366px] h-[900px] shrink-0 bg-black">
        <div className="h-[768px] flex flex-col">
          <Panel />
          <div className="flex-1 min-h-0 flex">
            <Launcher monitor="left" />
            <EvinceWindow />
          </div>
        </div>
      </div>
      <div className="w-[1440px] h-[900px] shrink-0 flex flex-col bg-[radial-gradient(circle_at_30%_80%,#c87a12,#8a4c0c_60%,#a95c10)]">
        <Panel title="pgAdmin III" />
        <div className="flex-1 min-h-0 flex">
          <Launcher monitor="right" />
          <div className="relative flex-1 min-w-0">
            <RearWindows />
            <PgAdminWindow />
            <ChromiumWindow />
          </div>
        </div>
      </div>
    </div>
  )
}
